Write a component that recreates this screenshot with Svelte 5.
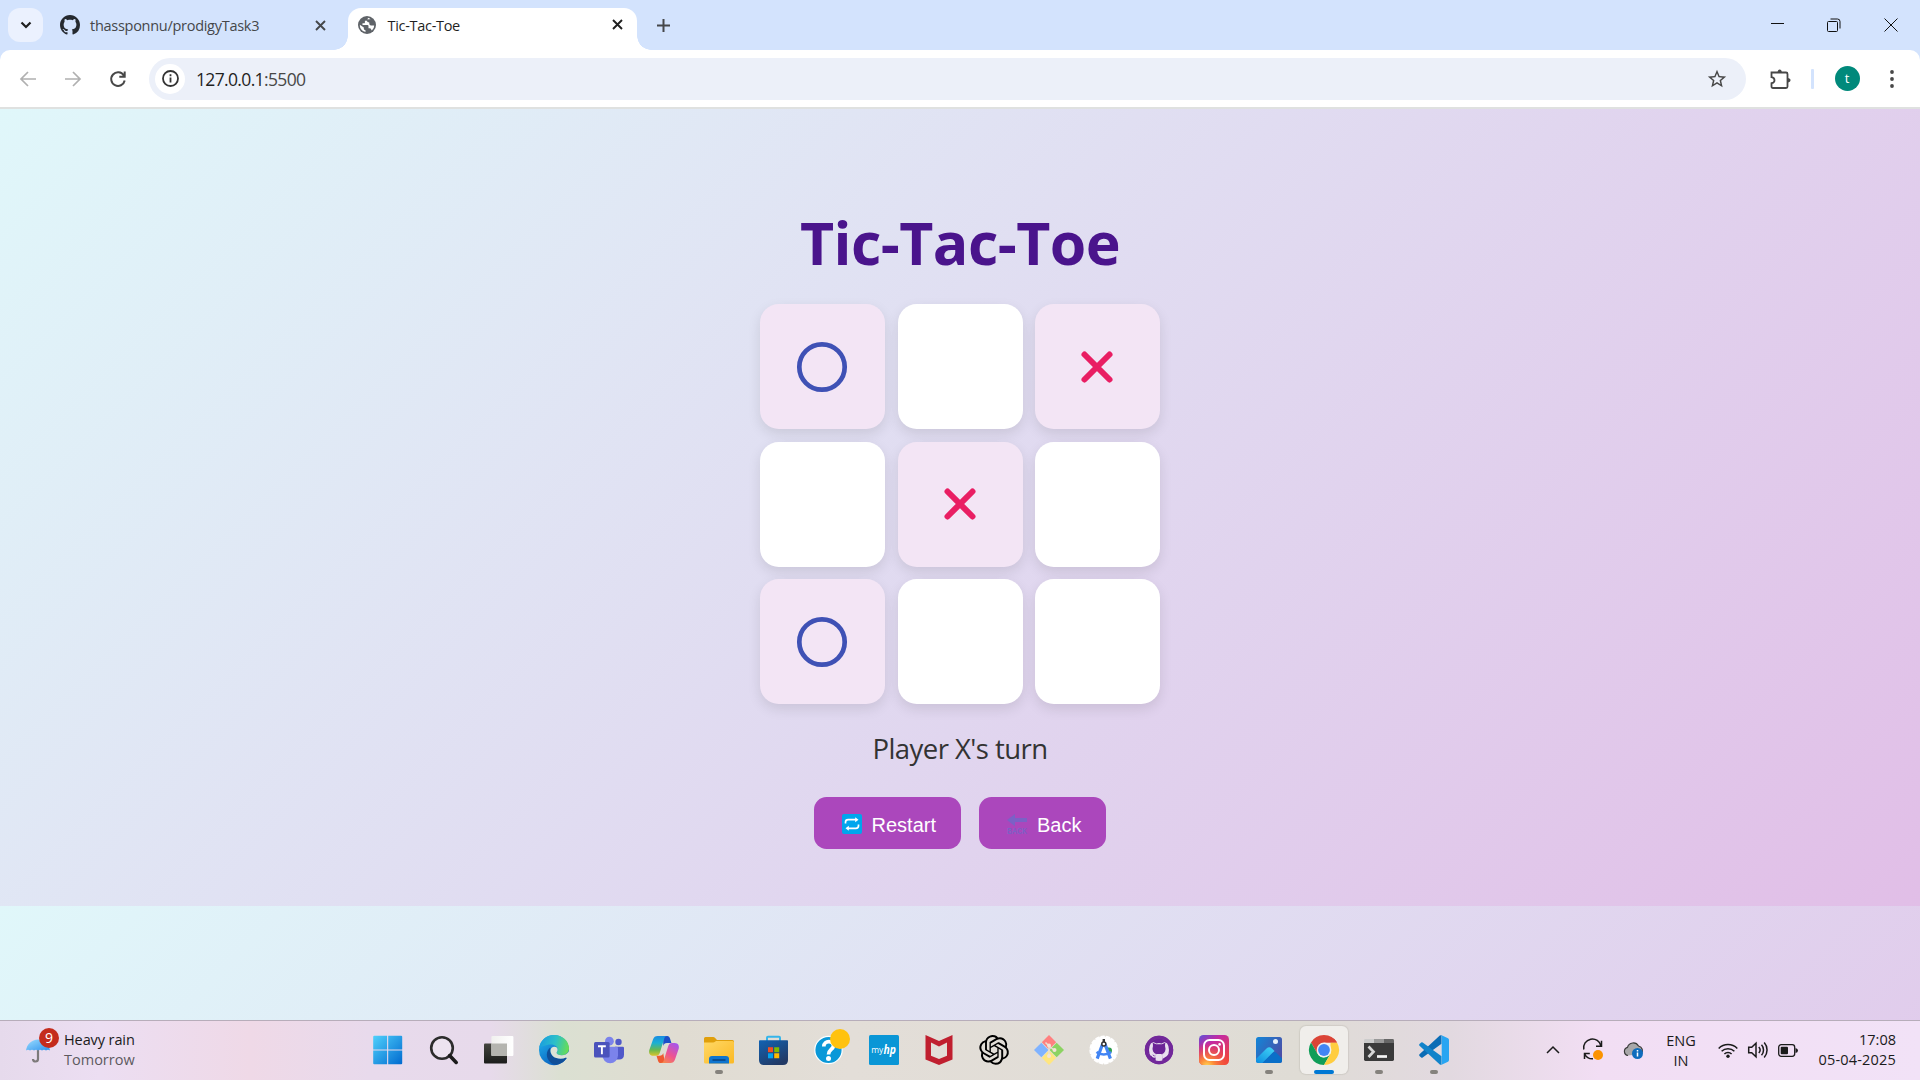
<script>
  const board = ['O', '', 'X', '', 'X', '', 'O', '', ''];
  const githubMark =
    'M8 0C3.58 0 0 3.58 0 8c0 3.54 2.29 6.53 5.47 7.59.4.07.55-.17.55-.38 0-.19-.01-.82-.01-1.49-2.01.37-2.53-.49-2.69-.94-.09-.23-.48-.94-.82-1.13-.28-.15-.68-.52-.01-.53.63-.01 1.08.58 1.23.82.72 1.21 1.87.87 2.33.66.07-.52.28-.87.51-1.07-1.78-.2-3.64-.89-3.64-3.95 0-.87.31-1.59.82-2.15-.08-.2-.36-1.02.08-2.12 0 0 .67-.21 2.2.82.64-.18 1.32-.27 2-.27s1.36.09 2 .27c1.53-1.04 2.2-.82 2.2-.82.44 1.1.16 1.92.08 2.12.51.56.82 1.27.82 2.15 0 3.07-1.87 3.75-3.65 3.95.29.25.54.73.54 1.48 0 1.07-.01 1.93-.01 2.2 0 .21.15.46.55.38A8.01 8.01 0 0 0 16 8c0-4.42-3.58-8-8-8z';
  const apps = [
    { id: 'start' }, { id: 'search' }, { id: 'taskview' }, { id: 'edge' }, { id: 'teams' },
    { id: 'copilot' }, { id: 'files', running: true }, { id: 'store' }, { id: 'help' },
    { id: 'myhp' }, { id: 'mcafee' }, { id: 'openai' }, { id: 'git' }, { id: 'studio' },
    { id: 'github' }, { id: 'instagram' }, { id: 'photos', running: true },
    { id: 'chrome', active: true }, { id: 'terminal', running: true }, { id: 'vscode', running: true }
  ];
</script>

{#snippet cross()}
  <svg class="cross" viewBox="0 0 11 11"><path d="M1 1l9 9M10 1l-9 9" /></svg>
{/snippet}

{#snippet appIcon(id)}
  <svg class="app-icon" viewBox="0 0 30 30">
    {#if id === 'start'}
      <defs><linearGradient id="gStart" x1="0" y1="0" x2="29" y2="29" gradientUnits="userSpaceOnUse"><stop stop-color="#4fd0fb" /><stop offset="1" stop-color="#0069cf" /></linearGradient></defs>
      <path fill="url(#gStart)" d="M-.8 1.8q0-1 1-1h12.9v13.7H-.8zM14.2.8h13q1 0 1 1v12.7h-14zM-.8 15.6h13.9v13.7H.2q-1 0-1-1zM14.2 15.6h14v12.7q0 1-1 1h-13z" />
    {:else if id === 'search'}
      <circle cx="13" cy="13" r="10.8" fill="#f0eaf4" fill-opacity=".6" stroke="#2c2c2c" stroke-width="2.6" />
      <path d="M20.6 20.6l6.6 6.8" stroke="#1c1c1c" stroke-width="3.6" stroke-linecap="round" />
    {:else if id === 'taskview'}
      <defs>
        <linearGradient id="gTvA" x2="0" y2="1"><stop stop-color="#44453f" /><stop offset="1" stop-color="#1b1c1b" /></linearGradient>
        <linearGradient id="gTvB" x1="0" x2="1"><stop stop-color="#f1f1ef" /><stop offset="1" stop-color="#fff" /></linearGradient>
      </defs>
      <rect x="0" y="8.4" width="23" height="20.2" rx="1" fill="url(#gTvA)" />
      <rect x="7.4" y="1" width="22" height="20" rx="1" fill="url(#gTvB)" />
      <path d="M7.4 8.4H23V21H8.4q-1 0-1-1z" fill="#b4b4af" />
    {:else if id === 'edge'}
      <defs>
        <linearGradient id="gEdA" x1="0" y1="8" x2="30" y2="16" gradientUnits="userSpaceOnUse"><stop stop-color="#1a9de0" /><stop offset=".5" stop-color="#2cc0c8" /><stop offset="1" stop-color="#6ee04a" /></linearGradient>
        <linearGradient id="gEdB" x1="0" y1="10" x2="14" y2="30" gradientUnits="userSpaceOnUse"><stop stop-color="#1da4e4" /><stop offset="1" stop-color="#0a62c0" /></linearGradient>
      </defs>
      <path fill="url(#gEdB)" d="M0 15a15 15 0 0 1 30 0l-2.500 8.500A15 15 0 0 1 0 15z" />
      <path fill="url(#gEdA)" d="M.2 12.6C1.4 5.4 7.300 0 15 0c9 0 15 6.600 15 13.200 0 4-3 7-7 7-3.400 0-5.400-1.200-5.400-2.400 0-.8 1-1.300 1-3.400 0-2.500-2.500-4.900-6.600-4.900C6.600 9.500 1 12.300.2 12.600z" />
      <path fill="#104f98" d="M11.200 12.400c-2 1.600-3.400 4.300-3.400 7 0 5 4 9.800 9.400 10.400 4.400-.6 8.200-3.200 10.500-6.800.3-.5-.1-.8-.6-.6-1.800.9-3.700 1.300-5.500 1.300-6 0-10.400-3.600-10.400-8 0-1.400.4-2.500 0-3.300z" />
      <path fill="#dde3d6" d="M11.500 15.700c0-2.300 1.800-3.900 3.900-3.900 2 0 3.200 1.300 3.200 2.900 0 1.700-1 2-1 3.100 0 1.500 2.300 2.600 5.400 2.500 2.600-.1 4.800-1 6.200-3l1.300.5c-.4 1.900-1.200 3.600-2.400 5.400-.3.400-.7-.8-1-.8-1.800.9-3.700 1.300-5.500 1.300-6 0-10.100-3.600-10.100-8z" />
    {:else if id === 'teams'}
      <circle cx="24.500" cy="7" r="3.200" fill="#5059c9" /><circle cx="15.400" cy="6.200" r="4.400" fill="#7b83eb" />
      <path fill="#5059c9" d="M21 11.800h7.800q1.200 0 1.200 1.200v6.400q0 5-5 5h-4z" />
      <path fill="#7b83eb" d="M8.400 11.800h14.200q1.400 0 1.400 1.400v7.200a7.800 7.800 0 0 1-15.600 0z" />
      <rect y="7" width="15.600" height="15.600" rx="1.500" fill="#4b53bc" />
      <path d="M4 11.300h7.800M7.900 11.300v8" stroke="#fff" stroke-width="1.900" />
    {:else if id === 'copilot'}
      <defs>
        <linearGradient id="gCoA" x1="5" y1="1" x2="5" y2="21" gradientUnits="userSpaceOnUse"><stop stop-color="#1a8ce2" /><stop offset=".35" stop-color="#1ab0d4" /><stop offset=".7" stop-color="#69b84e" /><stop offset="1" stop-color="#e0c52a" /></linearGradient>
        <linearGradient id="gCoB" x1="26" y1="8" x2="12" y2="29" gradientUnits="userSpaceOnUse"><stop stop-color="#a654ec" /><stop offset=".5" stop-color="#ee5391" /><stop offset="1" stop-color="#f8973d" /></linearGradient>
      </defs>
      <path fill="#1c4fc8" d="M14 1h4.200c1.600 0 2.300 1 2.800 2.400l1.400 4.600h-4.600c-2 0-3 1.200-3.500 3z" />
      <path fill="url(#gCoA)" d="M8.700 1h9.600c-2 0-2.700 1.300-3.200 3l-4.200 13.600C10.200 20 9 20.800 7 20.800H4.200C.8 20.800-.5 18 .3 15L4 4.500C4.800 2.100 6.300 1 8.700 1z" />
      <path fill="#ee5a30" d="M16 28.100h-4.200c-1.600 0-2.300-1-2.800-2.400L7.500 20.800h3.200c2 0 3-1 3.500-2.800z" />
      <path fill="url(#gCoB)" d="M21.300 28.100h-9.600c2 0 2.700-1.300 3.200-3l4.200-13.600C19.800 9 21 8 23 8h2.800c3.400 0 4.700 2.800 3.900 5.800L26 24.600c-.8 2.400-2.300 3.500-4.700 3.500z" />
    {:else if id === 'files'}
      <defs><linearGradient id="gFi" x2="1" y2="1"><stop stop-color="#ffd866" /><stop offset="1" stop-color="#fbb924" /></linearGradient></defs>
      <path fill="#e09f0b" d="M0 3.500Q0 2 1.500 2h7.700q1 0 1.700.7L13 5h15.500Q30 5 30 6.500V12H0z" />
      <path fill="url(#gFi)" d="M0 7.500h9.200q1 0 1.800-.7l1-.8h16.500q1.500 0 1.500 1.500V27q0 1.500-1.500 1.500h-27Q0 28.500 0 27z" />
      <path fill="#0f75cf" d="M5 28.500V24q0-3 3-3h14q3 0 3 3v4.500z" /><path d="M8.500 25h13" stroke="#0a4a8e" stroke-width="1.800" />
    {:else if id === 'store'}
      <defs><linearGradient id="gSt" x2=".6" y2="1"><stop stop-color="#1163b4" /><stop offset="1" stop-color="#223a66" /></linearGradient></defs>
      <path d="M8 6.500V2.800q0-1 1-1h11q1 0 1 1v3.700" fill="none" stroke="#36b5ea" stroke-width="2" />
      <path fill="url(#gSt)" d="M0 6q0-.8.800-.8h27.400q.8 0 .8.800v19q0 5-5 5H5q-5 0-5-5z" />
      <path fill="#f25022" d="M9 12.200h5v5H9z" /><path fill="#7fba00" d="M15.200 12.200h5v5h-5z" /><path fill="#00a4ef" d="M9 18.300h5v5H9z" /><path fill="#ffb900" d="M15.200 18.300h5v5h-5z" />
    {:else if id === 'help'}
      <circle cx="14.500" cy="15" r="13.700" fill="#0a98d8" stroke="#fff" stroke-width="1.200" />
      <path d="M9.800 11.500c0-6.500 10.200-6.300 9.600-.5-.4 3.700-4.700 3.500-4.900 8.500" fill="none" stroke="#fff" stroke-width="3.700" /><circle cx="14.500" cy="23.500" r="2.500" fill="#fff" />
      <circle cx="26" cy="4" r="10" fill="#ffc20e" />
    {:else if id === 'myhp'}
      <rect width="30" height="30" rx="1.500" fill="#0a96d6" />
      <text class="my" x="2.300" y="17.600" textLength="12" lengthAdjust="spacingAndGlyphs">my</text>
      <text class="hp" x="14.500" y="18.600" textLength="12.500" lengthAdjust="spacingAndGlyphs">hp</text>
    {:else if id === 'mcafee'}
      <path fill="#c01f2f" fill-rule="evenodd" d="M1.500 0l13.500 6L28.500 0v24.500L15 30 1.500 24.500zM7 7.500v13.300l8 3.300 8-3.300V7.500l-8 4z" />
    {:else if id === 'openai'}
      <path transform="translate(.2 0)scale(1.240)" d="M22.2819 9.8211a5.9847 5.9847 0 0 0-.5157-4.9108 6.0462 6.0462 0 0 0-6.5098-2.9A6.0651 6.0651 0 0 0 4.9807 4.1818a5.9847 5.9847 0 0 0-3.9977 2.9 6.0462 6.0462 0 0 0 .7427 7.0966 5.98 5.98 0 0 0 .511 4.9107 6.051 6.051 0 0 0 6.5146 2.9001A5.9847 5.9847 0 0 0 13.2599 24a6.0557 6.0557 0 0 0 5.7718-4.2058 5.9894 5.9894 0 0 0 3.9977-2.9001 6.0557 6.0557 0 0 0-.7475-7.0729zm-9.022 12.6081a4.4755 4.4755 0 0 1-2.8764-1.0408l.1419-.0804 4.7783-2.7582a.7948.7948 0 0 0 .3927-.6813v-6.7369l2.02 1.1686a.071.071 0 0 1 .038.052v5.5826a4.504 4.504 0 0 1-4.4945 4.4944zm-9.6607-4.1254a4.4708 4.4708 0 0 1-.5346-3.0137l.142.0852 4.783 2.7582a.7712.7712 0 0 0 .7806 0l5.8428-3.3685v2.3324a.0804.0804 0 0 1-.0332.0615L9.74 19.9502a4.4992 4.4992 0 0 1-6.1408-1.6464zM2.3408 7.8956a4.485 4.485 0 0 1 2.3655-1.9728V11.6a.7664.7664 0 0 0 .3879.6765l5.8144 3.3543-2.0201 1.1685a.0757.0757 0 0 1-.071 0l-4.8303-2.7865A4.504 4.504 0 0 1 2.3408 7.872zm16.5963 3.8558L13.1038 8.364 15.1192 7.2a.0757.0757 0 0 1 .071 0l4.8303 2.7913a4.4944 4.4944 0 0 1-.6765 8.1042v-5.6772a.79.79 0 0 0-.407-.667zm2.0107-3.0231l-.142-.0852-4.7735-2.7818a.7759.7759 0 0 0-.7854 0L9.409 9.2297V6.8974a.0662.0662 0 0 1 .0284-.0615l4.8303-2.7866a4.4992 4.4992 0 0 1 6.6802 4.66zM8.3065 12.863l-2.02-1.1638a.0804.0804 0 0 1-.038-.0567V6.0742a4.4992 4.4992 0 0 1 7.3757-3.4537l-.142.0805L8.704 5.459a.7948.7948 0 0 0-.3927.6813zm1.0976-2.3654l2.602-1.4998 2.6069 1.4998v2.9994l-2.5974 1.4997-2.6067-1.4997Z" />
    {:else if id === 'git'}
      <path fill="#ff8080" d="M15 0l7.200 7.200-7.200 7.300-7.200-7.300z" /><path fill="#80b3ff" d="M7.300 7.800l7.200 7.200-7.200 7.200L0 15z" />
      <path fill="#8cd362" d="M22.700 7.800L30 15l-7.300 7.200-7.200-7.200z" /><path fill="#ffe680" d="M15 15.500l7.200 7.200L15 30l-7.200-7.300z" />
      <path d="M11.500 7.500l3.500 3.500v10.500M15 11l5 4" stroke="#e9dfd3" stroke-width="1.500" fill="none" />
      <circle cx="15" cy="10.500" r="2" fill="#f3e4d8" /><circle cx="20.500" cy="15" r="2" fill="#f3e4d8" /><circle cx="15" cy="21" r="2" fill="#f3e4d8" />
    {:else if id === 'studio'}
      <circle cx="14.800" cy="15" r="13.400" fill="#fff" stroke="#fff" stroke-width="2" stroke-dasharray="4.400 1" />
      <path d="M15.500 12.500h4.500a3 3 0 0 1 0 6z" fill="#2f9e4f" />
      <path d="M13.600 9L8.200 23.600M16 9l5.400 14.600" stroke="#4285f4" stroke-width="3.200" /><path d="M7.500 17c4 3.300 10.600 3.300 14.600 0" stroke="#4285f4" stroke-width="2.600" fill="none" />
      <path d="M14.800 4v4" stroke="#333" stroke-width="2.400" /><circle cx="14.800" cy="9" r="2" fill="#fff" stroke="#333" stroke-width="1.500" />
    {:else if id === 'github'}
      <circle cx="15" cy="15" r="13" fill="#e9e0ee" stroke="#72289a" stroke-width="2.400" />
      <circle cx="15" cy="15" r="11.500" fill="#6b2496" />
      <path fill="#e9e0ee" d="M11.600 25.800v-3.200c-3 .6-3.600-1.400-4.300-2.200-.5-.6-1.200-.7-.5-1 1.700-.4 2.200 1.500 3.300 1.800.6.200 1.300 0 1.600-.2.100-.7.400-1.200.8-1.500-3-.5-5-2-5-5.700 0-1.500.5-2.500 1.300-3.400-.3-1-.2-2.100.2-3.200 1.300 0 2.300.7 3.200 1.300a10 10 0 0 1 5.600 0c.9-.6 1.900-1.300 3.200-1.300.4 1.100.5 2.200.2 3.200.8.900 1.300 1.900 1.300 3.400 0 3.700-2 5.200-5 5.700.6.600.9 1.300.9 2.300v4a11.500 11.500 0 0 1-6.800 0z" />
      <circle cx="15" cy="15" r="12.600" fill="none" stroke="#72289a" stroke-width="3.200" />
      <path fill="#6b2496" d="M9 11c-1.300 3.500.3 7.500 3.600 8h5.200c3.300-.6 4.500-4.500 3.200-8l.2-3.200-3.300 1.400h-5.800L8.800 7.800z" />
      <path fill="#e9e0ee" d="M6.800 8.500Q5 11 5 15q0 4 2 6l1.800-1.600 2.600 1.800.9-1.800C9 18.500 7.600 16 8 13l1-2.500-.4-3.200zM23.200 8.500Q25 11 25 15q0 4-2 6l-4.600 3-.4-4.600C21 18.500 22.400 16 22 13l-1-2.500.4-3.200z" />
    {:else if id === 'instagram'}
      <defs>
        <linearGradient id="gIgA" x1="0" y1="0" x2=".7" y2="1"><stop stop-color="#5b51d8" /><stop offset=".35" stop-color="#c32aa3" /><stop offset="1" stop-color="#f0453c" /></linearGradient>
        <radialGradient id="gIgB" cx=".27" cy="1.050" r=".8"><stop stop-color="#ffdc55" /><stop offset=".3" stop-color="#fd8c38" /><stop offset="1" stop-color="#f0453c" stop-opacity="0" /></radialGradient>
      </defs>
      <rect width="30" height="30" rx="4.500" fill="url(#gIgA)" /><rect width="30" height="30" rx="4.500" fill="url(#gIgB)" />
      <rect x="5" y="5" width="20" height="20" rx="5.500" fill="none" stroke="#fff" stroke-width="2" /><circle cx="15" cy="15" r="5" fill="none" stroke="#fff" stroke-width="2" /><circle cx="20.600" cy="9.400" r="1.300" fill="#fff" />
    {:else if id === 'photos'}
      <defs>
        <linearGradient id="gPhA" x2="1" y2=".6"><stop stop-color="#1286d8" /><stop offset="1" stop-color="#4a4fa8" /></linearGradient>
        <linearGradient id="gPhB" x1="0" y1="1" x2=".8" y2="0"><stop stop-color="#0c8be0" /><stop offset="1" stop-color="#3ed0f5" /></linearGradient>
      </defs>
      <rect x="2" y="2" width="26" height="26" rx="2.500" fill="url(#gPhA)" />
      <path fill="url(#gPhB)" d="M2 24l10.500-10.500q2.800-2.500 5.500 0l2.500 2.500L8.500 28h-4Q2 28 2 25.500z" />
      <path fill="#0a6fc8" d="M8.500 28l10-10q2-1.800 4 0l5.500 5.500v2q0 2.500-2.500 2.500z" />
      <circle cx="21.500" cy="6.500" r="2.500" fill="#e6f1fb" />
    {:else if id === 'chrome'}
      <path fill="#db4437" d="M2 7.500A15 15 0 0 1 28 7.500H15L8.500 18.800z" /><path fill="#0f9d58" d="M2 7.500l6.500 11.300A7.500 7.500 0 0 0 15 22.500L21.500 18.700 15 30A15 15 0 0 1 2 7.500z" />
      <path fill="#ffcd40" d="M28 7.500A15 15 0 0 1 15 30l6.500-11.300L21.500 7.500z" /><path fill="#db4437" d="M15 7.500h13a15 15 0 0 0-3-3.700H12z" />
      <circle cx="15" cy="15" r="7.400" fill="#f1f1f1" /><circle cx="15" cy="15" r="5.900" fill="#4285f4" />
    {:else if id === 'terminal'}
      <path fill="#3a3a3a" d="M0 7.500h30V24.600q0 1.400-1.400 1.400H1.400Q0 26 0 24.600z" /><path fill="#ccc" d="M0 8V5.400Q0 4 1.400 4H10v4z" /><path fill="#999" d="M10 4h10v4H10z" /><path fill="#666" d="M20 4h8.600Q30 4 30 5.400V8H20z" />
      <path d="M4.500 11.500l5 5.300-5 5.200" fill="none" stroke="#d6d6d6" stroke-width="2.700" /><path d="M13 21.500h10" stroke="#f4f4f4" stroke-width="2.700" />
    {:else if id === 'vscode'}
      <path fill="#0b6cb5" d="M22.500.2v8.600L3.700 22.500q-.8.500-1.500 0l-1.700-1.600q-.8-.8 0-1.700L20.800.6q.8-.6 1.700-.4z" />
      <path fill="#1183ca" d="M22.500 29.800v-8.600L3.700 7.500q-.8-.5-1.500 0L.5 9.100q-.8.800 0 1.700l20.300 18.600q.8.600 1.700.4z" />
      <path fill="#29a5f2" d="M22 .1l7 3.200q1 .5 1 1.600v20.200q0 1.100-1 1.600l-7 3.200q.7-.5.7-1.500V1.600q0-1-.7-1.500z" />
    {/if}
  </svg>
{/snippet}

<div class="screen">
  <header class="tabs">
    <div class="tab-search"><svg viewBox="0 0 12 8"><path d="M1.500 1.500L6 6l4.500-4.500" /></svg></div>
    <div class="tab idle">
      <svg class="favicon" viewBox="0 0 16 16"><path fill="#24292f" d={githubMark} /></svg>
      <span class="tab-title repo">thassponnu/prodigyTask3</span>
      {@render cross()}
    </div>
    <div class="tab active">
      <svg class="globe" viewBox="0 0 18 18"><circle cx="9" cy="9" r="9" fill="#5f6368" /><path fill="#fff" d="M9.800 1.800v1.300q0 1.700-1.800 1.700H6.900v1.600q0 .9-1 .9H4.500v1.700h5q1 0 1 1v2.300h1.100q1.300 0 1.600 1.200l.6 1.100q2.400-2 2.400-5.200H13q-1.700 0-1.700-1.700V6.500q-2.300 0-2.300-1.400 0-1.800 1.800-1.800h1.800Q11.400 2 9.800 1.800zM1.800 8.700q-.3 5.800 5.700 7.300v-1.800q-1.700 0-1.700-1.700v-1z" /></svg>
      <span class="tab-title game">Tic-Tac-Toe</span>
      {@render cross()}
    </div>
    <svg class="plus" viewBox="0 0 13 13"><path d="M6.500 0v13M0 6.500h13" /></svg>
    <div class="window-controls">
      <svg viewBox="0 0 14 14"><path d="M1 5.500h13" /></svg>
      <svg viewBox="0 0 14 14"><rect x=".5" y="3.500" width="10" height="10" rx="1" /><path d="M3.500 1h7q2.500 0 2.500 2.500v7" /></svg>
      <svg viewBox="0 0 14 14"><path d="M.5.5l13 13M13.500.5l-13 13" /></svg>
    </div>
  </header>

  <div class="toolbar">
    <svg class="nav dim" viewBox="0 0 16 16"><path d="M16 8H1.500M8 1L1 8l7 7" /></svg>
    <svg class="nav dim" viewBox="0 0 16 16"><path d="M0 8h14.500M8 1l7 7-7 7" /></svg>
    <svg class="nav" viewBox="0 0 16 16"><path d="M13.800 4.500A6.800 6.800 0 1 0 14.700 9.500M14.700.5v5.300H9.300" /></svg>
    <div class="omnibox">
      <span class="site-info"><svg viewBox="0 0 17 17"><circle cx="8.500" cy="8.500" r="7.500" /><path d="M8.500 7.500v5M8.500 4.300v2" /></svg></span>
      <span class="url">127.0.0.1<span>:5500</span></span>
      <svg class="star" viewBox="0 0 24 24"><path d="M22 9.240l-7.190-.62L12 2 9.190 8.630 2 9.240l5.460 4.730L5.820 21 12 17.270 18.180 21l-1.630-7.030L22 9.240zM12 15.400l-3.760 2.270 1-4.280-3.320-2.880 4.380-.38L12 6.100l1.710 4.040 4.380.38-3.320 2.880 1 4.280L12 15.400z" /></svg>
    </div>
    <svg class="puzzle" viewBox="0 0 21 20"><path d="M1.500 5V3.500H16q1.500 0 1.500 1.500v12.500q0 1.500-1.500 1.500H3q-1.500 0-1.500-1.500v-3.300q3-.5 3-3t-3-3z" /><path class="solid" d="M7.500 3.500q.3-3 2.200-3t2.200 3zM17.500 9q3 .3 3 2.200t-3 2.200z" /></svg>
    <span class="divider"></span>
    <span class="avatar">t</span>
    <svg class="kebab" viewBox="0 0 4 18"><circle cx="2" cy="2" r="1.900" /><circle cx="2" cy="9" r="1.900" /><circle cx="2" cy="16" r="1.900" /></svg>
  </div>

  <main>
    <h1>Tic-Tac-Toe</h1>
    <div class="board">
      {#each board as mark}
        <div class="cell" class:taken={mark}>
          {#if mark === 'O'}
            <svg class="mark nought" viewBox="0 0 50 50"><circle cx="25" cy="25" r="22.700" /></svg>
          {:else if mark === 'X'}
            <svg class="mark ex" viewBox="0 0 50 50"><path d="M12.500 12.500l25 25M37.500 12.500l-25 25" /></svg>
          {/if}
        </div>
      {/each}
    </div>
    <p class="status">Player X's turn</p>
    <div class="actions">
      <button>
        <svg viewBox="0 0 20 20"><rect width="20" height="20" rx="2" fill="#00a6ed" /><path d="M3.500 9.500V8.300q0-2.600 2.600-2.600h8M16.500 10.500v1.200q0 2.600-2.600 2.600h-8" fill="none" stroke="#fff" stroke-width="1.700" /><path d="M13.200 3.200l3.300 2.500-3.300 2.500zM6.800 11.800l-3.300 2.500 3.300 2.500z" fill="#fff" /></svg>
        <span>Restart</span>
      </button>
      <button>
        <svg viewBox="0 0 20 20"><path d="M0 6L8 0v4h12v4H8v4.300z" fill="#7b61c6" /><text class="back-word" x="0" y="20" textLength="20" lengthAdjust="spacingAndGlyphs">BACK</text></svg>
        <span>Back</span>
      </button>
    </div>
  </main>

  <footer>
    <div class="weather">
      <div class="umbrella">
        <svg viewBox="0 0 24 25"><defs><linearGradient id="gUm" x2="1" y2="1"><stop stop-color="#9bdcff" /><stop offset="1" stop-color="#2e92ec" /></linearGradient></defs><path d="M12 10v11q0 2.500-2.500 2.500T7 21" fill="none" stroke="#7d7a7a" stroke-width="2.200" /><path fill="url(#gUm)" d="M0 12.500C1 6 5.500 2 12 1.500 18.500 2 23 6 24 12.500q-2-1.600-4 0-2-1.600-4 0-2-1.600-4 0-2-1.600-4 0-2-1.600-4 0-2-1.600-4 0z" /></svg>
        <span class="badge">9</span>
      </div>
      <div class="forecast"><span class="rain">Heavy rain</span><span class="when">Tomorrow</span></div>
    </div>
    <nav class="apps">
      {#each apps as app}
        <div class="slot" class:running={app.running} class:focused={app.active}>{@render appIcon(app.id)}</div>
      {/each}
    </nav>
    <div class="tray">
      <svg class="chevron" viewBox="0 0 14 8"><path d="M1 7l6-6 6 6" /></svg>
      <svg class="sync" viewBox="0 0 20 20"><path d="M.8 9.500A8.700 8.700 0 0 1 18 6M18.500.8v5.500H13M1.500 19v-5.500h5.300M1.700 14A8.700 8.700 0 0 0 10 18.800" /><circle cx="15" cy="15" r="5" /></svg>
      <svg class="cloud" viewBox="0 0 20 17"><path d="M5 13.500a4.200 4.200 0 0 1-.5-8.200A6 6 0 0 1 15.500 4a4.700 4.700 0 0 1 2.500 8" fill="#a9a7a9" stroke="#3a3a3a" stroke-width="1.200" /><circle cx="14.500" cy="11.500" r="5.500" fill="#0f6cbd" /><path d="M14.500 10.500v4M14.500 8v1.400" stroke="#fff" stroke-width="1.500" /></svg>
      <div class="lang"><span>ENG</span><span>IN</span></div>
      <svg class="wifi" viewBox="0 0 20 15"><path d="M.7 5.500a13 13 0 0 1 18.600 0M3.600 8.300a9 9 0 0 1 12.800 0M6.400 11a5 5 0 0 1 7.200 0" /><circle cx="10" cy="13.200" r="1.700" /></svg>
      <svg class="volume" viewBox="0 0 20 16"><path d="M.7 5.300h3L8 1.200v13.600L3.700 10.700h-3zM10.800 5a4.500 4.500 0 0 1 0 6M13.500 2.800a7.700 7.700 0 0 1 0 10.400M16.200.6a11 11 0 0 1 0 14.800" /></svg>
      <svg class="battery" viewBox="0 0 20 13"><rect x=".7" y=".7" width="16" height="11.600" rx="2.500" fill="none" stroke="#1b1b1b" stroke-width="1.300" /><rect x="2.700" y="2.700" width="7.300" height="7.600" rx="1" /><path d="M17.500 4q2.500.5 2.500 2.500T17.500 9z" /></svg>
      <div class="clock"><span class="time">17:08</span><span class="date">05-04-2025</span></div>
    </div>
  </footer>
</div>

<style>
  :global(body) { margin: 0; overflow: hidden; }
  .screen { width: 1920px; height: 1080px; display: flex; flex-direction: column; overflow: hidden; font-family: 'Open Sans', 'Noto Sans', sans-serif; background: #d3e3fd; }
  svg { display: block; flex: none; overflow: visible; }
  .tabs { height: 50px; display: flex; align-items: center; }
  .tab-search { width: 35px; height: 34px; margin-left: 8px; border-radius: 12px; background: #ebf1fe; display: grid; place-items: center; }
  .tab-search svg { width: 12px; height: 8px; fill: none; stroke: #1f1f1f; stroke-width: 2.2; }
  .tab { display: flex; align-items: center; box-sizing: border-box; }
  .idle { width: 305px; padding: 0 22px 0 17px; }
  .favicon { width: 20px; height: 20px; }
  .tab-title { font-size: 14.5px; line-height: 20px; white-space: nowrap; margin-top: 2px; }
  .repo { color: #45474a; margin-left: 10px; letter-spacing: -0.28px; }
  .game { color: #1f1f1f; margin-left: 11.500px; letter-spacing: -0.3px; }
  .cross { width: 11px; height: 11px; margin-left: auto; fill: none; stroke: #45474a; stroke-width: 1.9; }
  .active .cross { stroke: #1f1f1f; }
  .active { position: relative; align-self: flex-end; width: 289px; height: 42.500px; padding: 0 14px 8px 10px; border-radius: 13px 13px 0 0; background: #fff; }
  .active::before, .active::after { content: ''; position: absolute; bottom: 0; width: 14px; height: 14px; }
  .active::before { right: 100%; background: radial-gradient(circle at 0 0, #d3e3fd 13.500px, #fff 14px); }
  .active::after { left: 100%; background: radial-gradient(circle at 100% 0, #d3e3fd 13.500px, #fff 14px); }
  .globe { width: 18px; height: 18px; }
  .plus { width: 13px; height: 13px; margin-left: 19.500px; stroke: #45474a; stroke-width: 2; }
  .window-controls { margin-left: auto; display: flex; gap: 43px; padding-right: 22px; }
  .window-controls svg { width: 14px; height: 14px; fill: none; stroke: #111; stroke-width: 1; }
  .toolbar { height: 57px; display: flex; align-items: center; box-sizing: content-box; padding-left: 19.500px; background: #fff; border-bottom: 2px solid #dfe1e0; border-radius: 10px 10px 0 0; }
  .nav { width: 16px; height: 16px; margin-right: 29px; fill: none; stroke: #474747; stroke-width: 2; }
  .dim { stroke: #b0b0b0; stroke-width: 1.7; }
  .omnibox { width: 1597px; height: 42px; margin-left: -5.500px; box-sizing: border-box; padding: 0 20px 0 6px; display: flex; align-items: center; border-radius: 21px; background: #ecf0f9; }
  .site-info { width: 30px; height: 30px; border-radius: 50%; background: #fff; display: grid; place-items: center; }
  .site-info svg { width: 17px; height: 17px; fill: none; stroke: #333; stroke-width: 1.8; }
  .url { margin-left: 11px; padding-top: 1px; font-size: 17.500px; letter-spacing: -0.65px; color: #1f1f1f; }
  .url span { color: #474747; }
  .star { width: 22px; height: 22px; margin-left: auto; margin-right: -2px; fill: #474747; }
  .puzzle { width: 21px; height: 20px; margin-left: 24px; fill: none; stroke: #474747; stroke-width: 1.8; }
  .solid { fill: #474747; stroke: none; }
  .divider { width: 2.500px; height: 20px; margin-left: 20px; border-radius: 1px; background: #d3e3fd; }
  .avatar { width: 25px; height: 25px; margin-left: 21px; border-radius: 50%; background: #00897b; color: #fff; font-size: 13px; line-height: 24px; text-align: center; }
  .kebab { width: 4px; height: 18px; margin-left: 30px; fill: #474747; }

  main { height: 911px; display: flex; flex-direction: column; align-items: center; background: linear-gradient(135deg, #e0f7fa, #e1bee7) 0 0 / 100% 797px; }
  h1 { margin: 93px 0 22px; height: 80px; line-height: 80px; font-size: 59px; font-weight: 700; letter-spacing: -0.55px; color: #4a148c; white-space: nowrap; }
  .board { display: grid; grid-template-columns: repeat(3, 125px); grid-auto-rows: 125px; gap: 12.500px; }
  .cell { display: grid; place-items: center; box-sizing: border-box; padding-right: 1px; border-radius: 18.750px; background: #fff; box-shadow: 0 5px 12.500px rgba(0, 0, 0, .1); }
  .taken { background: #f3e5f5; }
  .mark { width: 50px; height: 50px; fill: none; stroke-linecap: round; }
  .nought { stroke: #3f51b5; stroke-width: 4.700; }
  .ex { stroke: #e91e63; stroke-width: 6; }
  .status { margin: 24px 0 28px; height: 41px; line-height: 41px; font-size: 27.500px; letter-spacing: -0.55px; color: #333; white-space: nowrap; }
  .actions { display: flex; gap: 18px; }
  button { height: 52px; display: flex; align-items: center; gap: 10px; padding: 2px 25px 0 28px; border: 0; border-radius: 12.500px; background: #ab47bc; color: #fff; font: 20px 'Liberation Sans', Arial, sans-serif; }
  button svg { width: 20px; height: 20px; }
  button span { padding-top: 2px; }
  .back-word { fill: #7b61c6; font-size: 8.500px; font-weight: 700; }

  footer { flex: 1; display: flex; border-top: 1px solid #b7adba; background: linear-gradient(90deg, #e6daec 0, #ecdef2 100px, #efd9e7 250px, #e8daec 370px, #e7daeb 490px, #dbe0d2 560px, #e0dcd2 680px, #e3ded8 850px, #dfdcd5 1300px, #e2d9e0 1450px, #f2def4 1600px, #f2e2f7 1920px); }
  .weather { width: 361.500px; display: flex; padding-left: 26px; box-sizing: border-box; }
  .umbrella { position: relative; width: 38px; padding-top: 17px; }
  .umbrella svg { width: 24px; height: 25px; }
  .badge { position: absolute; left: 13px; top: 6.500px; width: 20px; height: 20px; border-radius: 50%; background: #c42b1c; color: #fff; font-size: 14px; line-height: 20px; text-align: center; }
  .forecast, .lang, .clock { display: flex; flex-direction: column; padding-top: 9px; font-size: 14.500px; line-height: 20px; color: #1b1b1b; white-space: nowrap; }
  .rain { letter-spacing: -0.1px; }
  .when { color: #5d5a5f; }
  .apps { display: flex; align-items: center; }
  .slot { position: relative; width: 55px; height: 59px; box-sizing: border-box; padding-bottom: 2px; display: grid; place-items: center; }
  .app-icon { position: relative; width: 30px; height: 30px; }
  .focused::before { content: ''; position: absolute; inset: 5px 3.500px 6px; border-radius: 6px; background: #f0eeeb; box-shadow: 0 0 1px 1px rgba(120, 120, 110, .15); }
  .running::after, .focused::after { content: ''; position: absolute; bottom: 6px; left: 23.500px; width: 8px; height: 4px; border-radius: 2px; background: #85827d; }
  .focused::after { left: 17.500px; width: 20px; background: #0078d4; }
  .my { fill: #fff; font-size: 9.500px; }
  .hp { fill: #fff; font-size: 13px; font-style: italic; font-weight: 700; }
  .tray { margin-left: auto; display: flex; align-items: center; padding-right: 24px; }
  .tray > svg { fill: none; stroke: #1b1b1b; stroke-width: 1.5; margin-bottom: 1px; }
  .chevron { width: 14px; height: 8px; margin-right: 23px; }
  .sync { width: 20px; height: 20px; margin-right: 20px; }
  .sync circle { fill: #fb9300; stroke: none; }
  .tray .cloud { width: 20px; height: 17px; margin-right: 18px; stroke: none; }
  .lang { align-self: flex-start; width: 40px; align-items: center; margin-right: 17px; padding-top: 10px; }
  .wifi { width: 20px; height: 15px; margin-right: 10px; }
  .wifi circle { fill: #1b1b1b; stroke: none; }
  .volume { width: 20px; height: 16px; margin-right: 10px; }
  .tray .battery { width: 20px; height: 13px; fill: #1b1b1b; stroke: none; }
  .clock { align-self: flex-start; width: 98px; align-items: flex-end; }
  .date { letter-spacing: 0.18px; }
</style>
